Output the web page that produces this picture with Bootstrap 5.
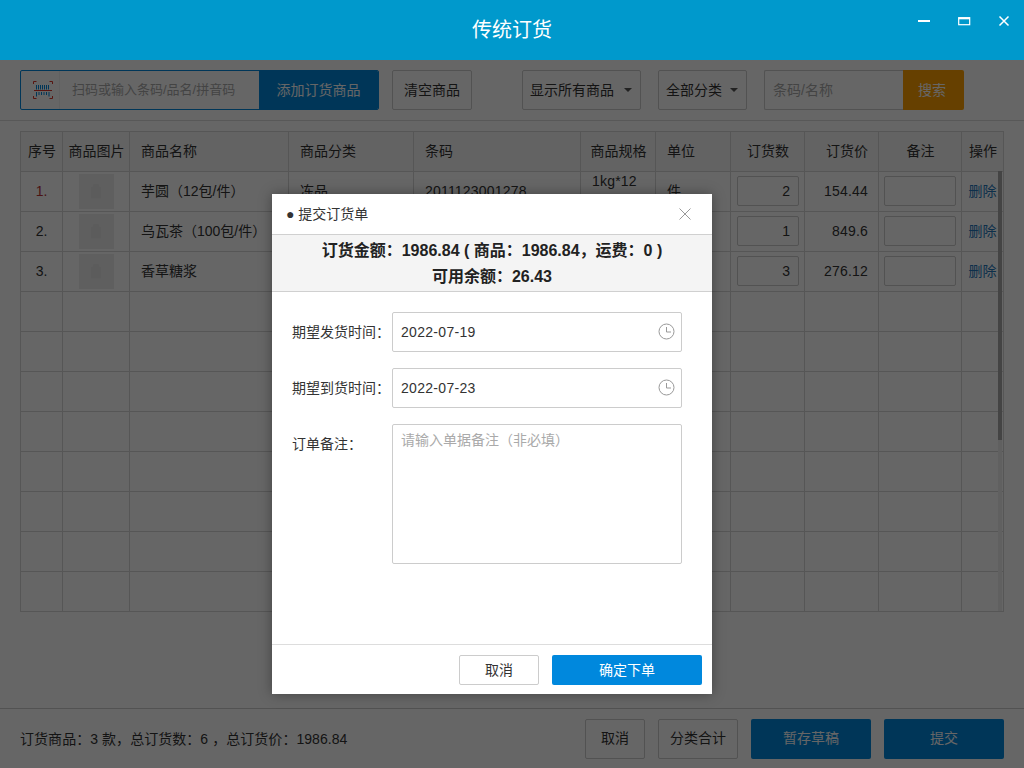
<!DOCTYPE html>
<html lang="zh-CN">
<head>
<meta charset="utf-8">
<title>传统订货</title>
<link rel="stylesheet" href="https://cdn.jsdelivr.net/npm/bootstrap@5.3.0/dist/css/bootstrap.min.css">
<style>
html,body{height:100%;overflow:hidden}
body{font-family:"Liberation Sans","Noto Sans CJK SC",sans-serif;font-size:14px;color:#333;background:#fff;position:relative}
.shell{width:1024px;height:768px}
.titlebar{height:60px;background:#0099cc;color:#fff;font-size:20px;position:relative}
.winctl{position:absolute;top:10px;right:0;display:flex}
.winbtn{width:40px;height:22px;display:flex;align-items:center;justify-content:center}
.tools{height:61px;padding:10px 20px;border-bottom:1px solid #ddd}
.h40{height:40px}
.scanbox{width:359px;border:1px solid #0088dd;border-radius:2px;overflow:hidden}
.scanicon{width:39px;flex:none;display:flex;align-items:center;justify-content:flex-end;padding-right:6px;border-right:1px solid #f3f3f3}
.scaninput{border:0;outline:0;flex:1;min-width:0;padding:0 12px;font-size:13px;font-family:inherit;background:#fff}
.scaninput::placeholder,.srchinput::placeholder,.noteinput::placeholder{color:#aaa;opacity:1}
.addbtn{width:119px;flex:none;background:#0088dd;color:#fff;border:0;border-radius:0;font-size:14px;padding:0}
.ghost{border:1px solid #ccc;border-radius:2px;background:#fff;color:#333;font-size:14px;padding:0;height:40px}
.w80{width:80px}.w60{width:60px}
.pick{height:40px;border:1px solid #ccc;border-radius:2px;padding:0 8px 0 7px;display:flex;align-items:center;justify-content:space-between;background:#fff}
.pick1{width:119px;margin-left:50px}
.pick2{width:89px;margin-left:17px}
.caret{width:0;height:0;border-left:4px solid transparent;border-right:4px solid transparent;border-top:4px solid #555}
.srchbox{width:200px;margin-left:17px;display:flex}
.srchinput{width:140px;height:40px;border:1px solid #ccc;border-right:0;border-radius:2px 0 0 2px;padding:0 8px;outline:0;font-family:inherit;font-size:14px;background:#fff}
.srchbtn{width:61px;margin-left:-1px;height:40px;background:#ffa000;color:#fff;border:0;border-radius:0 2px 2px 0;padding:0 3px 0 0;font-size:14px}
.tablewrap{position:relative;margin:10px 0 0 20px;width:983px}
.gridtbl{table-layout:fixed;width:983px;margin:0;border-collapse:collapse;color:#333;--bs-table-color:#333;--bs-table-bg:#fff}
.gridtbl th,.gridtbl td{height:40px;padding:0 11px;border:1px solid #d8d8d8;font-weight:400;font-size:14px;vertical-align:middle;line-height:19px;white-space:nowrap;overflow:hidden;box-shadow:none}
.gridtbl thead th{background:#f7f7f7;border-bottom-width:1px;height:39.5px}
.gridtbl tbody{border-top:0!important}
.gridtbl .pad0{padding:0;text-align:center}
.gridtbl th.pad0{padding-left:1px}
.gridtbl .numcell{padding-right:10px;text-align:right}
.gridtbl .wrap{white-space:normal;padding-right:4px}
.digits{letter-spacing:.2px}
.redno{color:#b33}
.thumb{width:35px;height:35px;background:#eee;margin:0 auto;display:flex;align-items:center;justify-content:center}
.qty,.rem{height:30px;border:1px solid #ccc;border-radius:2px;background:#fff;display:block;line-height:28px;text-align:right;padding:0 8px}
.qty{width:62px;margin:0 0 0 6px}
.rem{width:72px;margin:0 auto}
.dellink{color:#2277bb;text-decoration:none}
.scrollthumb{position:absolute;left:978px;top:40px;width:4px;height:269px;background:#aaa}
.scrolltrack{position:absolute;left:978px;top:40px;width:4px;height:440px;background:#f0f0f0}
.foot{position:absolute;left:0;right:0;top:708px;height:60px;border-top:1px solid #ccc;padding:10px 20px;background:#fff}
.foottext{padding-top:1px;letter-spacing:.05px}
.blue{background:#0088dd;color:#fff;border:0;border-radius:2px;padding:0;height:40px;width:120px;font-size:14px}
.shade{position:absolute;left:0;top:60px;width:1024px;height:708px;background:rgba(0,0,0,.6)}
.dialog{position:absolute;left:272px;top:194px;width:440px;height:500px;background:#fff;box-shadow:0 0 12px rgba(0,0,0,.35);display:flex;flex-direction:column;color:#333}
.dlghead{height:41px;flex:none;padding:0 20px 0 14px;border-bottom:1px solid #d0d0d0;display:flex;align-items:center;justify-content:space-between;font-size:14px}
.dlgsum{height:57px;flex:none;background:#f4f4f4;border-bottom:1px solid #d0d0d0;text-align:center;font-weight:700;font-size:16px;line-height:26px;padding-top:3px;color:#222}
.dlgform{flex:1;padding:20px 30px 0 20px}
.frow{display:flex;margin-bottom:16px}
.frow label{width:100px;flex:none;line-height:40px;font-size:14px}
.datebox{width:290px;height:40px;border:1px solid #ccc;border-radius:2px;padding:0 8px;display:flex;align-items:center;justify-content:space-between;font-size:14px;background:#fff}
.datebox span{letter-spacing:.3px}
.datebox svg{margin-right:-2px;margin-top:-2px}
.noteinput{width:290px;height:140px;border:1px solid #ccc;border-radius:2px;padding:5px 8px;resize:none;outline:0;font-family:inherit;font-size:14px;display:block}
.dlgfoot{height:50px;flex:none;border-top:1px solid #ddd;padding:10px;display:flex;justify-content:flex-end;gap:13px}
.dlgcancel{width:80px;height:30px;border:1px solid #ccc;border-radius:2px;background:#fff;color:#333;padding:0;font-size:14px}
.dlgok{width:150px;height:30px;border:0;border-radius:2px;background:#0088dd;color:#fff;padding:0;font-size:14px}
</style>
</head>
<body>
<div class="shell">
  <div class="titlebar d-flex align-items-center justify-content-center">传统订货
    <div class="winctl">
      <div class="winbtn"><svg width="12" height="12" viewBox="0 0 12 12"><rect x="0" y="5" width="12" height="2" fill="#fff"/></svg></div>
      <div class="winbtn"><svg width="14" height="12" viewBox="0 0 14 12"><rect x="1.700" y="2.700" width="11" height="7" fill="none" stroke="#fff" stroke-width="1.2"/><rect x="1.500" y="2.500" width="11.500" height="1.800" fill="#fff"/></svg></div>
      <div class="winbtn"><svg width="12" height="12" viewBox="0 0 12 12"><path d="M1.500 1.500l9 9M10.500 1.500l-9 9" stroke="#fff" stroke-width="1.500"/></svg></div>
    </div>
  </div>

  <div class="tools d-flex">
    <div class="scanbox d-flex h40">
      <div class="scanicon">
        <svg width="20" height="18" viewBox="0 0 20 18" fill="none"><path d="M.500 3V.500H3.500M16.500 .500H19.500V3M.500 15v2.500H3.500M16.500 17.500H19.500V15" stroke="#d9362b" stroke-width="1"/><path d="M1 9.500h18" stroke="#d9362b" stroke-width="1"/><path d="M3.500 4v4.500M5.500 4v4.500M7.500 4v4.500M9.500 4v4.500M11.500 4v4.500M13.500 4v4.500M15.500 4v4.500M3.500 11v4.500M6 11v3M8.500 11v3M11 11v3M13.500 11v3M16 11v4.500" stroke="#0088dd" stroke-width="1"/></svg>
      </div>
      <input class="scaninput" placeholder="扫码或输入条码/品名/拼音码">
      <button class="btn addbtn">添加订货商品</button>
    </div>
    <button class="btn ghost w80" style="margin-left:13px">清空商品</button>
    <div class="pick pick1"><span>显示所有商品</span><i class="caret"></i></div>
    <div class="pick pick2"><span>全部分类</span><i class="caret"></i></div>
    <div class="srchbox"><input class="srchinput" placeholder="条码/名称"><button class="btn srchbtn">搜索</button></div>
  </div>

  <div class="tablewrap">
    <table class="table gridtbl">
      <colgroup>
        <col style="width:42px"><col style="width:67px"><col style="width:159px"><col style="width:125px"><col style="width:167px"><col style="width:75px"><col style="width:75px"><col style="width:74px"><col style="width:74px"><col style="width:83px"><col style="width:42px">
      </colgroup>
      <thead>
        <tr><th class="pad0">序号</th><th class="pad0">商品图片</th><th>商品名称</th><th>商品分类</th><th>条码</th><th class="pad0">商品规格</th><th>单位</th><th class="pad0">订货数</th><th class="numcell">订货价</th><th class="pad0">备注</th><th class="pad0">操作</th></tr>
      </thead>
      <tbody>
        <tr><td class="pad0 redno">1.</td><td class="pad0"><div class="thumb"><svg width="12" height="16" viewBox="0 0 12 16"><path d="M3.500 1h5l1 3h1.500v10.500q0 1-1 1H2q-1 0-1-1V4h1.500z" fill="#e6e6e6"/></svg></div></td><td>芋圆（12包/件）</td><td>冻品</td><td class="digits">2011123001278</td><td class="wrap digits">1kg*12<br>&nbsp;</td><td>件</td><td class="pad0"><span class="qty">2</span></td><td class="numcell digits">154.44</td><td class="pad0"><span class="rem"></span></td><td class="pad0"><a class="dellink" href="#">删除</a></td></tr>
        <tr><td class="pad0">2.</td><td class="pad0"><div class="thumb"><svg width="12" height="16" viewBox="0 0 12 16"><path d="M3.500 1h5l1 3h1.500v10.500q0 1-1 1H2q-1 0-1-1V4h1.500z" fill="#e6e6e6"/></svg></div></td><td>乌瓦茶（100包/件）</td><td></td><td></td><td></td><td></td><td class="pad0"><span class="qty">1</span></td><td class="numcell digits">849.6</td><td class="pad0"><span class="rem"></span></td><td class="pad0"><a class="dellink" href="#">删除</a></td></tr>
        <tr><td class="pad0">3.</td><td class="pad0"><div class="thumb"><svg width="12" height="16" viewBox="0 0 12 16"><path d="M3.500 1h5l1 3h1.500v10.500q0 1-1 1H2q-1 0-1-1V4h1.500z" fill="#e6e6e6"/></svg></div></td><td>香草糖浆</td><td></td><td></td><td></td><td></td><td class="pad0"><span class="qty">3</span></td><td class="numcell digits">276.12</td><td class="pad0"><span class="rem"></span></td><td class="pad0"><a class="dellink" href="#">删除</a></td></tr>
        <tr><td></td><td></td><td></td><td></td><td></td><td></td><td></td><td></td><td></td><td></td><td></td></tr>
        <tr><td></td><td></td><td></td><td></td><td></td><td></td><td></td><td></td><td></td><td></td><td></td></tr>
        <tr><td></td><td></td><td></td><td></td><td></td><td></td><td></td><td></td><td></td><td></td><td></td></tr>
        <tr><td></td><td></td><td></td><td></td><td></td><td></td><td></td><td></td><td></td><td></td><td></td></tr>
        <tr><td></td><td></td><td></td><td></td><td></td><td></td><td></td><td></td><td></td><td></td><td></td></tr>
        <tr><td></td><td></td><td></td><td></td><td></td><td></td><td></td><td></td><td></td><td></td><td></td></tr>
        <tr><td></td><td></td><td></td><td></td><td></td><td></td><td></td><td></td><td></td><td></td><td></td></tr>
        <tr><td></td><td></td><td></td><td></td><td></td><td></td><td></td><td></td><td></td><td></td><td></td></tr>
      </tbody>
    </table>
    <div class="scrolltrack"></div>
    <div class="scrollthumb"></div>
  </div>

  <div class="foot d-flex align-items-center">
    <span class="flex-grow-1 foottext">订货商品：3 款，总订货数：6 ，总订货价：1986.84</span>
    <button class="btn ghost w60">取消</button>
    <button class="btn ghost w80" style="margin-left:13px">分类合计</button>
    <button class="btn blue" style="margin-left:13px">暂存草稿</button>
    <button class="btn blue" style="margin-left:13px">提交</button>
  </div>
</div>

<div class="shade"></div>

<div class="dialog">
  <div class="dlghead"><span>● 提交订货单</span><svg width="14" height="14" viewBox="0 0 14 14"><path d="M1.500 1.500l11 11M12.500 1.500l-11 11" stroke="#999" stroke-width="1"/></svg></div>
  <div class="dlgsum">订货金额：1986.84 ( 商品：1986.84，运费：0 )<br>可用余额：26.43</div>
  <div class="dlgform">
    <div class="frow"><label>期望发货时间：</label><div class="datebox"><span>2022-07-19</span><svg width="17" height="17" viewBox="0 0 17 17" fill="none" stroke="#999"><circle cx="8.500" cy="8.500" r="7.500"/><path d="M8.500 4v5h4.500"/></svg></div></div>
    <div class="frow"><label>期望到货时间：</label><div class="datebox"><span>2022-07-23</span><svg width="17" height="17" viewBox="0 0 17 17" fill="none" stroke="#999"><circle cx="8.500" cy="8.500" r="7.500"/><path d="M8.500 4v5h4.500"/></svg></div></div>
    <div class="frow"><label>订单备注：</label><textarea class="noteinput" placeholder="请输入单据备注（非必填）"></textarea></div>
  </div>
  <div class="dlgfoot"><button class="btn dlgcancel">取消</button><button class="btn dlgok">确定下单</button></div>
</div>
<script src="https://cdn.jsdelivr.net/npm/bootstrap@5.3.0/dist/js/bootstrap.bundle.min.js"></script>
</body>
</html>
